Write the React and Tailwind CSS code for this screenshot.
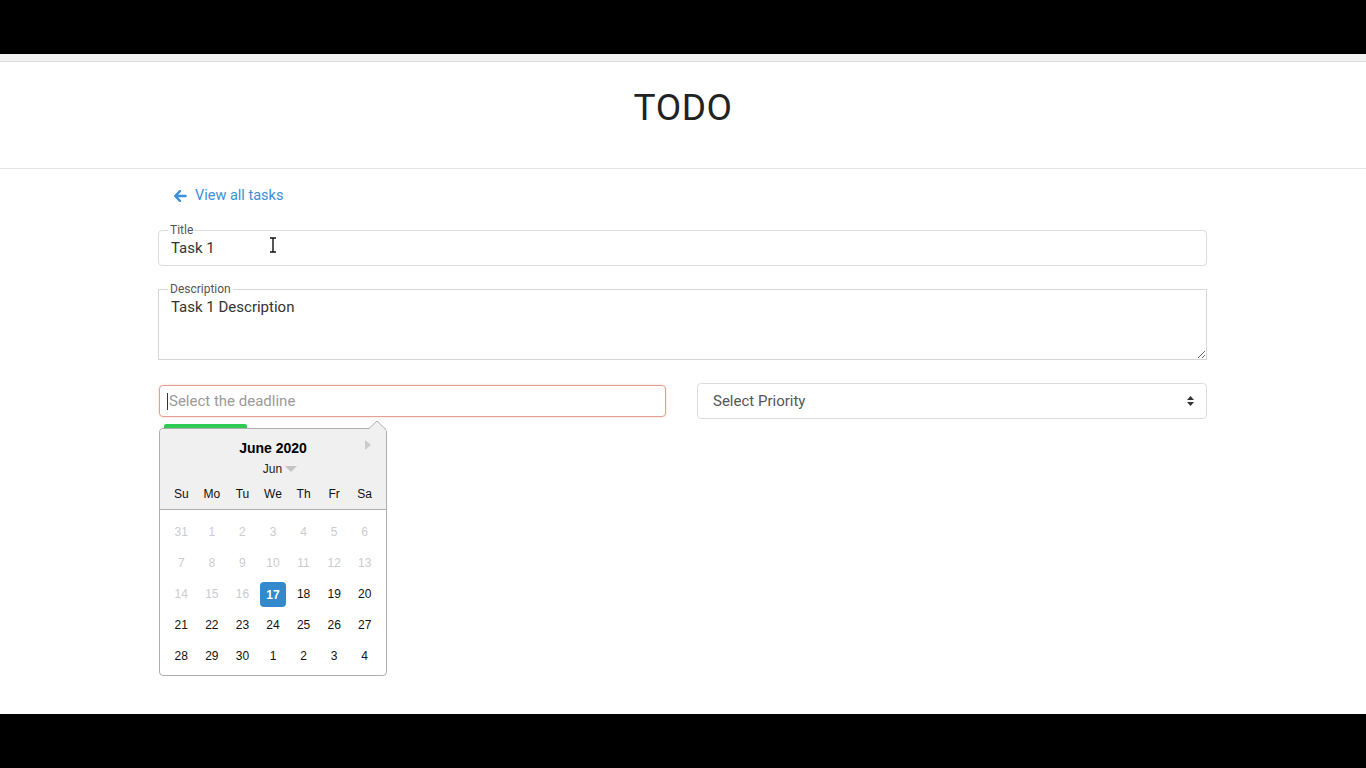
import React from "react";

const weeks = [
  [[31, 0], [1, 0], [2, 0], [3, 0], [4, 0], [5, 0], [6, 0]],
  [[7, 0], [8, 0], [9, 0], [10, 0], [11, 0], [12, 0], [13, 0]],
  [[14, 0], [15, 0], [16, 0], [17, 2], [18, 1], [19, 1], [20, 1]],
  [[21, 1], [22, 1], [23, 1], [24, 1], [25, 1], [26, 1], [27, 1]],
  [[28, 1], [29, 1], [30, 1], [1, 1], [2, 1], [3, 1], [4, 1]],
];

const dayNames = ["Su", "Mo", "Tu", "We", "Th", "Fr", "Sa"];

function Calendar() {
  return (
    <div className="relative ml-[1px] w-[228px] rounded-[4px] border border-[#aeaeae] bg-white font-['Liberation_Sans',Arial,sans-serif] text-[12px] text-black">
      <svg className="absolute -top-[9px] right-[0px] h-[10px] w-[18px]" viewBox="0 0 18 10">
        <path d="M0 9.5 L9 1 L18 9.5" fill="#f0f0f0" stroke="#aeaeae" strokeWidth="1" />
      </svg>
      <div className="relative rounded-t-[4px] border-b border-[#aeaeae] bg-[#f0f0f0] pt-[10px] pb-[2px]">
        <svg className="absolute right-[15px] top-[11px] h-[10px] w-[6px]" viewBox="0 0 6 10">
          <path d="M0 0 L6 5 L0 10 Z" fill="#cccccc" />
        </svg>
        <div className="text-center text-[14px] leading-[18px] font-bold">June 2020</div>
        <div className="mt-[4px] flex items-center justify-center gap-[3px] text-[12px] leading-[16px] text-[#222]">
          <span className="ml-[14px]">Jun</span>
          <svg className="h-[6px] w-[12px]" viewBox="0 0 12 6">
            <path d="M0 0 L12 0 L6 6 Z" fill="#c4c4c4" />
          </svg>
        </div>
        <div className="mt-[5px] grid grid-cols-7 px-[6px]">
          {dayNames.map((d) => (
            <div key={d} className="h-[25px] text-center leading-[25px] text-[#111]">
              {d}
            </div>
          ))}
        </div>
      </div>
      <div className="px-[6px] pt-[7px] pb-[3px]">
        {weeks.map((w, i) => (
          <div key={i} className="grid h-[31px] grid-cols-7 items-center">
            {w.map(([n, s], j) => (
              <div key={j} className="flex justify-center">
                {s === 2 ? (
                  <div className="flex h-[25px] w-[26px] items-center justify-center rounded-[4px] bg-[#3289cc] font-bold text-white">
                    {n}
                  </div>
                ) : (
                  <div className={"h-[25px] leading-[25px] text-center " + (s === 1 ? "text-[#111]" : "text-[#cccccc]")}>
                    {n}
                  </div>
                )}
              </div>
            ))}
          </div>
        ))}
      </div>
    </div>
  );
}

export default function App() {
  return (
    <div className="flex h-screen flex-col bg-black font-['Roboto',Arial,sans-serif]">
      <div className="h-[54px] shrink-0 bg-black" />
      <div className="flex flex-1 flex-col bg-white">
        <div className="h-[8px] border-b border-[#dcdcdc] bg-[#f2f2f2]" />
        <header className="flex h-[107px] items-center justify-center border-b border-[#e5e5e5]">
          <h1 className="-mt-[16px] text-[37px] leading-none tracking-[0.5px] text-[#222]">TODO</h1>
        </header>
        <main className="ml-[158px] w-[1049px] pt-[17px]">
          <a className="ml-[15px] flex w-max items-center gap-[8px] text-[14.5px] leading-[20px] text-[#3a8fd9]">
            <svg className="h-[14px] w-[14px]" viewBox="0 0 14 14">
              <path d="M12.5 7 H2.5 M7 2.2 L2.2 7 L7 11.8" fill="none" stroke="#3a8fd9" strokeWidth="2.4" strokeLinecap="round" strokeLinejoin="round" />
            </svg>
            <span>View all tasks</span>
          </a>

          <fieldset className="relative mt-[18px] rounded-[4px] border border-[#dcdcdc] px-[12px] pb-[7px]">
            <legend className="ml-[-3px] px-[2px] text-[12px] leading-[12px] text-[#555]">Title</legend>
            <div className="pt-[2px] text-[15px] leading-[20px] text-[#333]">Task 1</div>
            <svg className="absolute left-[110px] top-[1px] h-[16px] w-[8px]" viewBox="0 0 8 16">
              <path d="M1 1 H7 M4 1 V15 M1 15 H7" fill="none" stroke="#fff" strokeWidth="3" />
              <path d="M1 1 H7 M4 1 V15 M1 15 H7" fill="none" stroke="#111" strokeWidth="1.4" />
            </svg>
          </fieldset>

          <fieldset className="mt-[17px] border border-[#d6d6d6]">
            <legend className="ml-[9px] px-[2px] text-[12px] leading-[12px] text-[#555]">Description</legend>
            <textarea
              readOnly
              value="Task 1 Description"
              className="block h-[64px] w-full resize-y bg-transparent px-[12px] pt-[2px] text-[15px] leading-[20px] text-[#333] outline-none"
            />
          </fieldset>

          <div className="mt-[23px] grid grid-cols-2 gap-[29px]">
            <div className="flex flex-col">
              <div className="ml-[1px] mr-[2px] mt-[2px] flex h-[32px] items-center rounded-[4px] border border-[#e3a090] px-[7px] text-[15px] text-[#9a9a9a] shadow-[0_0_2px_rgba(230,130,110,0.45)]">
                <span className="mr-[1px] inline-block h-[17px] w-[1px] bg-[#333]" />
                Select the deadline
              </div>
              <div className="ml-[6px] mt-[7px] h-[4px] w-[83px] rounded-t-[2px] bg-[#2ecc52]" />
              <Calendar />
            </div>
            <div>
              <div className="flex h-[36px] items-center justify-between rounded-[4px] border border-[#dcdcdc] pl-[15px] pr-[12px] text-[15px] text-[#555]">
                <span>Select Priority</span>
                <svg className="h-[10px] w-[7px]" viewBox="0 0 7 10">
                  <path d="M0 4 L3.5 0 L7 4 Z M0 6 L3.5 10 L7 6 Z" fill="#333" />
                </svg>
              </div>
            </div>
          </div>
        </main>
      </div>
      <div className="h-[54px] shrink-0 bg-black" />
    </div>
  );
}
